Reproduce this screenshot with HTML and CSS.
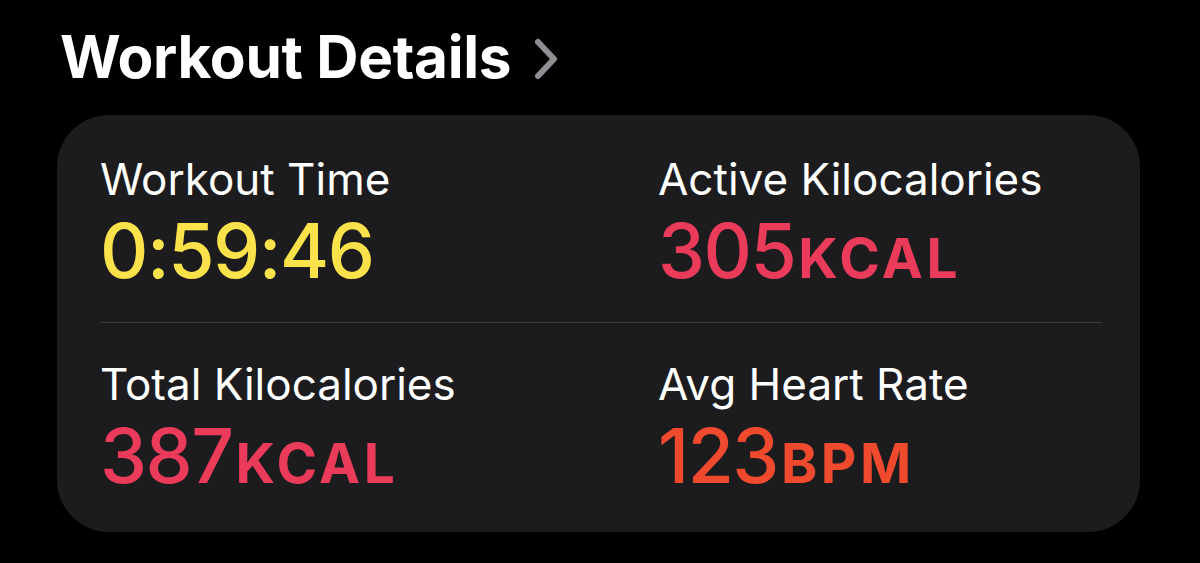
FILE: index.html
```html
<!DOCTYPE html>
<html>
<head>
    <title>Workout Details</title>
    <link rel="stylesheet" href="styles.css">
</head>
<body>
    <div class="header">
        <h1 class="title">Workout Details</h1>
        <svg class="chevron" width="26" height="42" viewBox="0 0 26 42">
            <path d="M5 4 L21 21 L5 38" fill="none" stroke="#8e8e93" stroke-width="6" stroke-linecap="round" stroke-linejoin="round"/>
        </svg>
    </div>

    <div class="card">
        <div class="stat">
            <div class="label">Workout Time</div>
            <div class="value yellow">0:59:46</div>
        </div>
        <div class="stat">
            <div class="label">Active Kilocalories</div>
            <div class="value pink">305<span class="unit">KCAL</span></div>
        </div>
        <div class="divider"></div>
        <div class="stat">
            <div class="label">Total Kilocalories</div>
            <div class="value pink">387<span class="unit">KCAL</span></div>
        </div>
        <div class="stat">
            <div class="label">Avg Heart Rate</div>
            <div class="value orange">123<span class="unit">BPM</span></div>
        </div>
    </div>
</body>
</html>
```

FILE: styles.css
```css
body {
    margin: 0;
    background: #000;
    font-family: Inter, "Liberation Sans", sans-serif;
    color: #fff;
}
.header {
    display: flex;
    align-items: center;
    gap: 22px;
    padding: 20px 0 0 60px;
    height: 74px;
}
.title {
    margin: 0;
    font-size: 58.5px;
    font-weight: 700;
    letter-spacing: -0.3px;
    line-height: 64px;
}
.chevron {
    display: block;
    margin-top: 4px;
}
.card {
    margin: 21px 0 0 57px;
    width: 1083px;
    height: 417px;
    box-sizing: border-box;
    background: #1c1c1e;
    border-radius: 52px;
    display: grid;
    grid-template-columns: 558px 1fr;
    grid-template-rows: auto auto auto;
    align-content: start;
    padding: 36px 38px 0 43px;
}
.stat {
    display: flex;
    flex-direction: column;
}
.label {
    font-size: 44px;
    line-height: 56px;
    font-weight: 400;
}
.value {
    font-size: 75px;
    line-height: 88px;
    font-weight: 500;
    letter-spacing: -1.5px;
}
.unit {
    font-size: 55px;
    font-weight: 700;
    letter-spacing: 3.5px;
    margin-left: 3px;
}
.divider {
    grid-column: 1 / 3;
    height: 1px;
    background: #3a3a3c;
    margin: 20px 0 33px;
}
.yellow { color: #fbe24a; }
.pink { color: #eb3b5a; }
.orange { color: #f04a2e; }
```
